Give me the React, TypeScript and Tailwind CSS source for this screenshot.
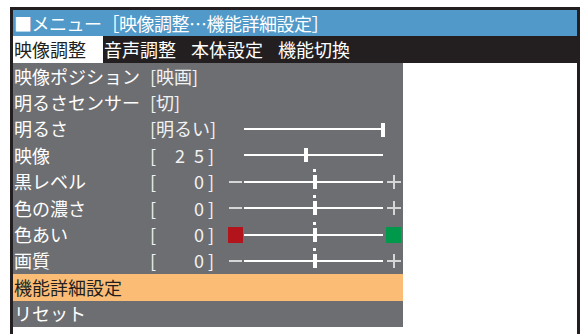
import React from "react";

type Row = {
  label: string;
  value?: string;
  num?: string;
  slider?: "max" | "25" | "minus" | "color";
};

const rows: Row[] = [
  { label: "映像ポジション", value: "[映画]" },
  { label: "明るさセンサー", value: "[切]" },
  { label: "明るさ", value: "[明るい]", slider: "max" },
  { label: "映像", num: "25", slider: "25" },
  { label: "黒レベル", num: "0", slider: "minus" },
  { label: "色の濃さ", num: "0", slider: "minus" },
  { label: "色あい", num: "0", slider: "color" },
  { label: "画質", num: "0", slider: "minus" },
];

const MinusSign = () => (
  <svg width="13" height="14" viewBox="0 0 13 14">
    <rect x="0" y="6" width="13" height="2" fill="#d6d6d6" />
  </svg>
);

const PlusSign = () => (
  <svg width="14" height="14" viewBox="0 0 14 14">
    <rect x="0" y="6" width="14" height="2" fill="#d6d6d6" />
    <rect x="6" y="0" width="2" height="14" fill="#d6d6d6" />
  </svg>
);

const Slider = ({ kind }: { kind: Row["slider"] }) => {
  const centered = kind === "minus" || kind === "color";
  return (
    <div className="flex items-center ml-[14px]">
      <div className="w-[16px] h-[16px] flex items-center">
        {kind === "minus" && (
          <div className="ml-[1px]">
            <MinusSign />
          </div>
        )}
        {kind === "color" && <div className="w-[15px] h-[16px] bg-[#b3131b]" />}
      </div>
      <div className="relative w-[139px] h-[2px] bg-white">
        {kind === "max" && (
          <div className="absolute right-[-2px] top-[-5px] w-[4px] h-[14px] bg-white" />
        )}
        {kind === "25" && (
          <div className="absolute left-[60px] top-[-6px] w-[4px] h-[14px] bg-white" />
        )}
        {centered && (
          <>
            <div className="absolute left-[69px] top-[-12px] w-[3px] h-[3px] bg-white" />
            <div className="absolute left-[69px] top-[-6px] w-[4px] h-[14px] bg-white" />
          </>
        )}
      </div>
      <div className="w-[18px] h-[16px] flex items-center justify-end">
        {kind === "minus" && <PlusSign />}
        {kind === "color" && <div className="w-[15px] h-[16px] bg-[#00984a]" />}
      </div>
    </div>
  );
};

const NumValue = ({ num }: { num: string }) => (
  <div className="w-[64px] flex items-center text-[#f2f2f2]">
    <span className="w-[10px]">[</span>
    <div className="flex-1 flex justify-end">
      {num.split("").map((c, i) => (
        <span key={i} className="w-[19px] text-right">
          {c}
        </span>
      ))}
    </div>
    <span className="w-[10px] text-right">]</span>
  </div>
);

const App = () => {
  return (
    <div
      className="w-[587px] h-[334px] bg-white overflow-hidden pt-[7px] pl-[10px]"
      style={{ fontFamily: '"Noto Sans CJK JP", "Noto Sans", sans-serif' }}
    >
      <div className="w-[570px] h-[340px] border-[3px] border-b-0 border-[#231f20] flex flex-col">
        <div className="h-[26px] bg-[#5099c9] text-white text-[18px] leading-[26px] pl-[1px] tracking-[-0.5px] whitespace-nowrap">
          ■メニュー［映像調整…機能詳細設定］
        </div>
        <div className="h-[27px] bg-[#231f20] flex text-[18px] leading-[27px] text-white">
          <div className="w-[90px] bg-white text-[#231f20] pl-[1px]">映像調整</div>
          <div className="w-[87px] pl-[1px]">音声調整</div>
          <div className="w-[87px] pl-[1px]">本体設定</div>
          <div className="w-[87px] pl-[1px]">機能切換</div>
        </div>
        <div className="flex">
          <div className="w-[390px] bg-[#6d6e71] text-white text-[18px]">
            {rows.map((r) => (
              <div key={r.label} className="h-[26.4px] flex items-center pl-[1px]">
                <div className="w-[136px]">{r.label}</div>
                {r.value && <div className="w-[64px] text-[#f2f2f2] whitespace-nowrap">{r.value}</div>}
                {r.num && <NumValue num={r.num} />}
                {r.slider && <Slider kind={r.slider} />}
              </div>
            ))}
            <div className="h-[26.4px] flex items-center pl-[1px] bg-[#fbbd76] text-[#231f20]">
              機能詳細設定
            </div>
            <div className="h-[26.4px] flex items-center pl-[1px]">リセット</div>
          </div>
          <div className="flex-1 bg-white" />
        </div>
      </div>
    </div>
  );
};

export default App;
